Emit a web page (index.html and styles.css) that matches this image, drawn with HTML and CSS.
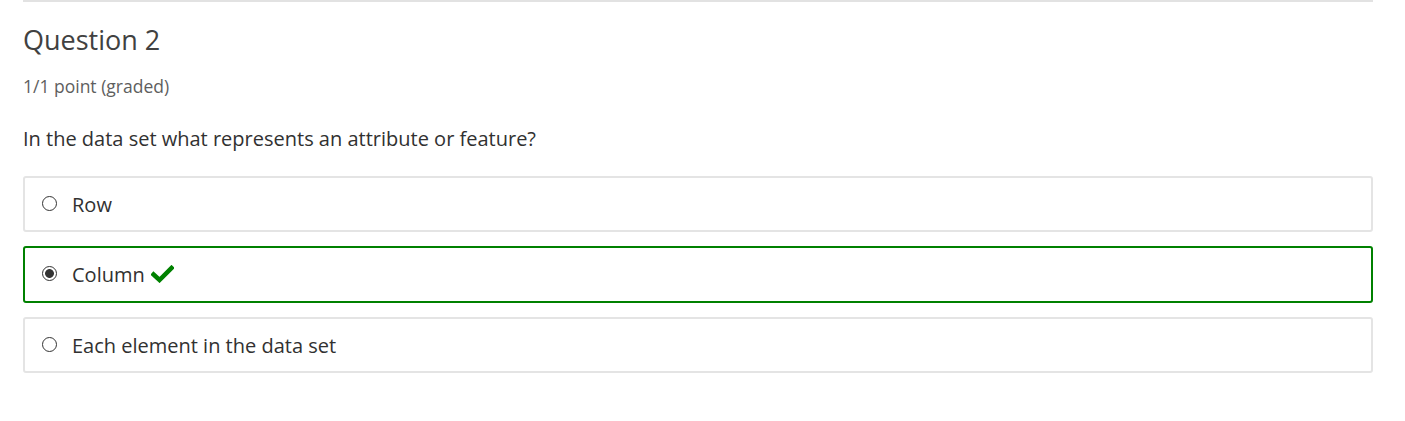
FILE: index.html
```html
<!DOCTYPE html>
<html>
<head>
<meta charset="utf-8">
<link rel="stylesheet" href="styles.css">
</head>
<body>
<div class="problem">
  <hr class="divider">
  <h3 class="title">Question 2</h3>
  <div class="points">1/1 point (graded)</div>
  <p class="prompt">In the data set what represents an attribute or feature?</p>
  <div class="choices">
    <label class="choice">
      <span class="radio"></span>
      <span class="label-text">Row</span>
    </label>
    <label class="choice correct">
      <span class="radio checked"></span>
      <span class="label-text">Column</span>
      <svg class="check" width="23" height="18" viewBox="0 0 23 18"><path d="M2.5 9.5 L8.5 15 L20.5 3" fill="none" stroke="#008100" stroke-width="4.5" stroke-linecap="square" stroke-linejoin="miter"/></svg>
    </label>
    <label class="choice">
      <span class="radio"></span>
      <span class="label-text">Each element in the data set</span>
    </label>
  </div>
</div>
</body>
</html>
```
FILE: styles.css
```css
html, body {
  margin: 0;
  padding: 0;
  background: #fff;
}
body {
  font-family: "Open Sans", "Noto Sans", sans-serif;
  color: #313131;
}
.problem {
  width: 1350px;
  margin-left: 23px;
}
.divider {
  margin: 0;
  border: 0;
  border-top: 2px solid #e2e2e2;
}
.title {
  margin: 21px 0 0 0;
  font-size: 27px;
  font-weight: 400;
  line-height: 34px;
  color: #414141;
}
.points {
  margin-top: 18px;
  font-size: 17.5px;
  line-height: 22px;
  color: #5e5e5e;
}
.prompt {
  margin: 28px 0 0 0;
  font-size: 20px;
  line-height: 28px;
  color: #313131;
}
.choices {
  margin-top: 23px;
  display: flex;
  flex-direction: column;
  gap: 14px;
}
.choice {
  display: flex;
  align-items: center;
  height: 56px;
  box-sizing: border-box;
  border: 2px solid #e4e4e4;
  border-radius: 3px;
  padding-left: 17px;
  font-size: 20px;
  color: #313131;
}
.choice.correct {
  height: 57px;
  border-color: #008100;
}
.radio {
  width: 15px;
  height: 15px;
  box-sizing: border-box;
  border: 1px solid #333;
  border-radius: 50%;
  margin-right: 15px;
  position: relative;
  top: -1px;
}
.radio.checked {
  background: radial-gradient(circle, #333 0 4px, #fff 4.8px);
}
.check {
  margin-left: 6px;
  position: relative;
  top: -1px;
}
```
